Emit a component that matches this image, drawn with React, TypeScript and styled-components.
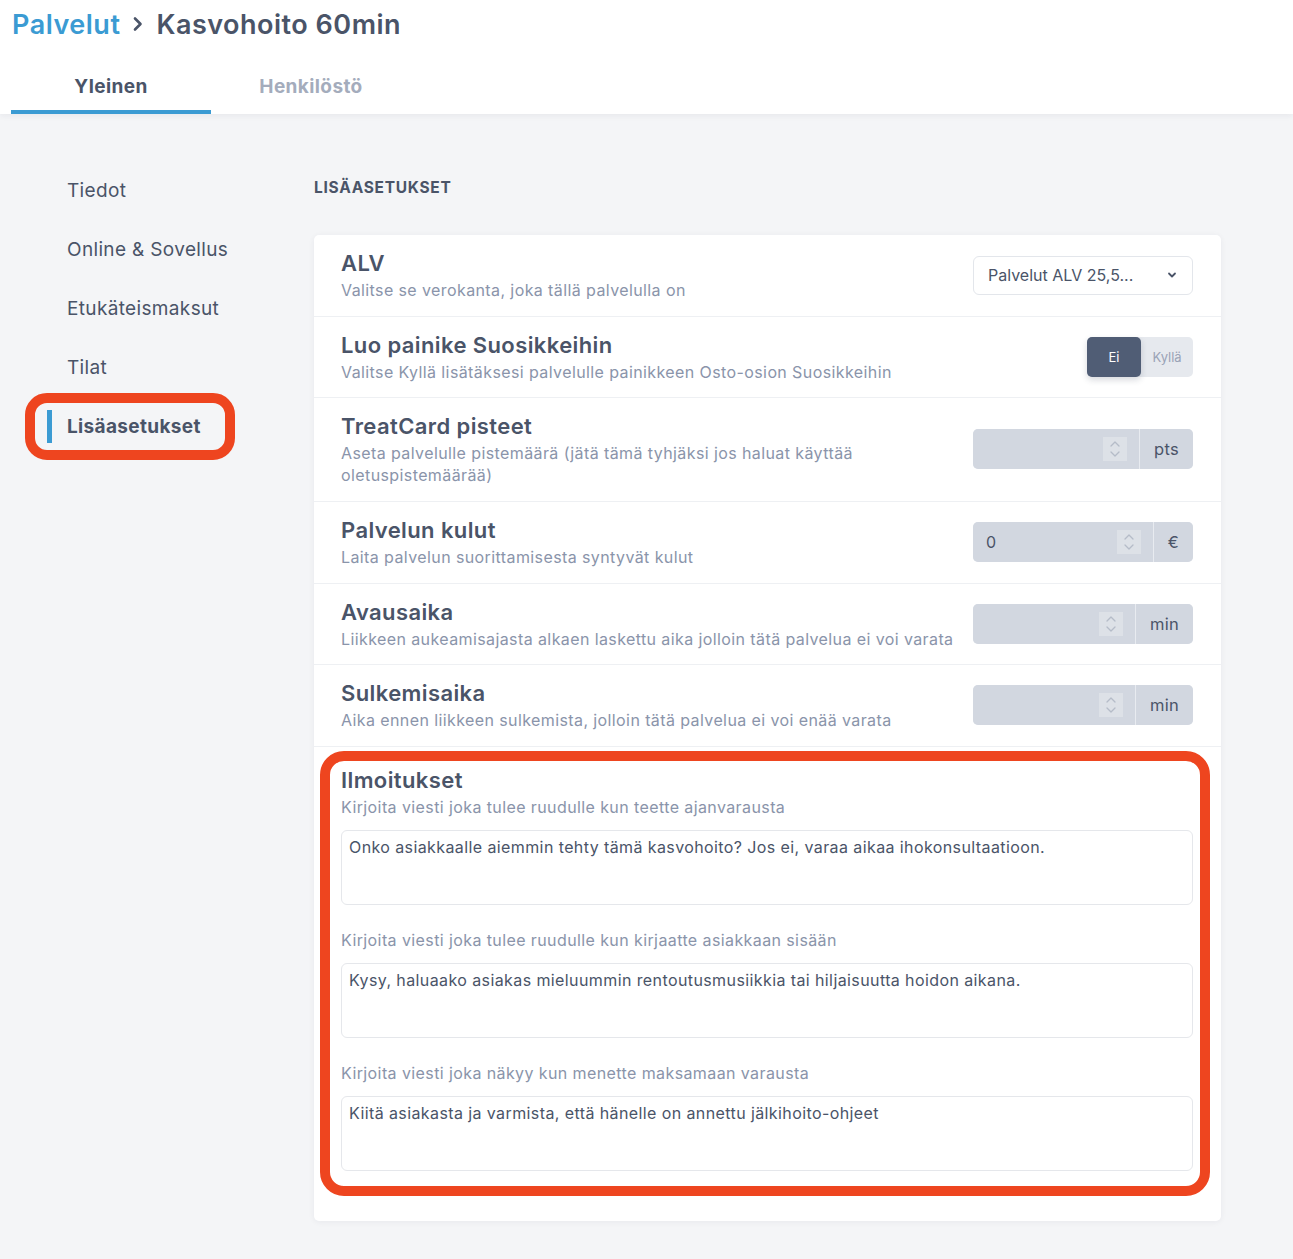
import * as React from 'react';
import styled, { createGlobalStyle } from 'styled-components';

const GlobalStyle = createGlobalStyle`
    body {
        margin: 0;
        background: #f4f5f7;
        font-family: Inter, "Open Sans", sans-serif;
        color: #4a5468;
    }
    * {
        box-sizing: border-box;
    }
`;

const Header = styled.header`
    background: #fff;
    box-shadow: 0 2px 6px rgba(30, 40, 60, 0.06);
    position: relative;
    z-index: 1;
`;

const Breadcrumb = styled.h1`
    margin: 0;
    height: 48px;
    padding-left: 12px;
    display: flex;
    align-items: center;
    gap: 12px;
    font-size: 27px;
    font-weight: 600;
    color: #4a5468;
    letter-spacing: 0.5px;

    .crumb-link {
        color: #3b9bd3;
    }
`;

const Tabs = styled.nav`
    display: flex;
    padding-left: 11px;
    height: 66px;
`;

const Tab = styled.div<{ $active?: boolean }>`
    width: 200px;
    display: flex;
    align-items: center;
    justify-content: center;
    padding-top: 14px;
    font-size: 19px;
    font-weight: 700;
    letter-spacing: 0.4px;
    color: ${p => (p.$active ? '#4a5468' : '#a4acbc')};
    border-bottom: 4px solid ${p => (p.$active ? '#3b9bd3' : 'transparent')};
`;

const Body = styled.div`
    display: flex;
    align-items: flex-start;
`;

const Sidebar = styled.aside`
    width: 314px;
    flex: none;
    padding: 47px 0 0 47px;
`;

const SideItem = styled.div<{ $active?: boolean }>`
    position: relative;
    height: 59px;
    display: flex;
    align-items: center;
    padding-left: 20px;
    font-size: 19px;
    letter-spacing: 0.35px;
    font-weight: ${p => (p.$active ? 700 : 400)};
    color: #4a5468;

    &::before {
        content: '';
        display: ${p => (p.$active ? 'block' : 'none')};
        position: absolute;
        left: 0;
        top: 13px;
        width: 5px;
        height: 33px;
        background: #3b9bd3;
    }
`;

const Highlight = styled.div<{ $radius: number }>`
    position: absolute;
    border: 10px solid #ee451f;
    border-radius: ${p => p.$radius}px;
    pointer-events: none;
`;

const Content = styled.main`
    width: 907px;
    padding: 64px 0 37px;
`;

const SectionTitle = styled.h2`
    margin: 0 0 37px;
    height: 20px;
    line-height: 20px;
    font-size: 15.5px;
    font-weight: 700;
    letter-spacing: 0.7px;
    text-transform: uppercase;
    color: #4a5468;
`;

const Card = styled.section`
    background: #fff;
    border-radius: 5px;
    box-shadow: 0 1px 6px rgba(30, 40, 60, 0.06);
`;

const Row = styled.div`
    display: flex;
    align-items: center;
    gap: 18px;
    padding: 14px 28px 14.7px 27px;
    border-bottom: 1px solid #eef0f3;
`;

const RowText = styled.div`
    flex: 1;
    min-width: 0;
`;

const RowTitle = styled.div`
    font-size: 22px;
    line-height: 28px;
    font-weight: 600;
    letter-spacing: 0.4px;
    color: #4a5468;
    margin-bottom: 2px;
`;

const RowDesc = styled.div`
    font-size: 16px;
    line-height: 22px;
    letter-spacing: 0.4px;
    color: #8a94aa;
`;

const SelectBox = styled.div`
    width: 220px;
    height: 39px;
    flex: none;
    display: flex;
    align-items: center;
    justify-content: space-between;
    padding: 0 14px 0 14px;
    border: 1px solid #e3e6eb;
    border-radius: 6px;
    font-size: 16px;
    color: #4a5468;
`;

const Toggle = styled.div`
    display: flex;
    height: 40px;
    flex: none;
    background: #e6e9ee;
    border-radius: 5px;
`;

const ToggleOption = styled.div<{ $active?: boolean }>`
    width: ${p => (p.$active ? 54 : 52)}px;
    display: flex;
    align-items: center;
    justify-content: center;
    font-size: 13px;
    border-radius: 5px;
    color: ${p => (p.$active ? '#fff' : '#9aa3b6')};
    background: ${p => (p.$active ? '#505d75' : 'transparent')};
    box-shadow: ${p => (p.$active ? '0 3px 6px rgba(40, 50, 70, 0.18)' : 'none')};
`;

const InputGroup = styled.div`
    width: 220px;
    height: 40px;
    flex: none;
    display: flex;
    gap: 1px;
    background: #e8ebf0;
    border-radius: 5px;
`;

const NumberField = styled.div`
    flex: 1;
    display: flex;
    align-items: center;
    justify-content: space-between;
    padding: 0 12px 0 13px;
    background: #d2d7e0;
    border-radius: 5px 0 0 5px;
    font-size: 16px;
    color: #4a5468;
`;

const Spinner = styled.span`
    width: 24px;
    height: 24px;
    display: flex;
    align-items: center;
    justify-content: center;
    background: #dde1e7;
    margin-left: auto;
`;

const Addon = styled.div`
    display: flex;
    align-items: center;
    padding: 0 14px;
    background: #d2d7e0;
    border-radius: 0 5px 5px 0;
    font-size: 16.5px;
    letter-spacing: 0.3px;
    color: #4a5468;
`;

const NoticeSection = styled.div`
    position: relative;
    padding: 19px 28px 50px 27px;
`;

const FieldLabel = styled.div<{ $spaced?: boolean }>`
    font-size: 16px;
    line-height: 22px;
    letter-spacing: 0.4px;
    color: #8a94aa;
    margin-top: ${p => (p.$spaced ? 24 : 0)}px;
`;

const TextArea = styled.textarea`
    display: block;
    width: 100%;
    height: 75px;
    margin-top: 12px;
    padding: 5px 7px;
    border: 1px solid #e5e7eb;
    border-radius: 6px;
    resize: none;
    font-family: inherit;
    font-size: 16px;
    line-height: 22px;
    letter-spacing: 0.4px;
    color: #4a5468;
    outline: none;
`;

const SpinnerIcon = () => (
    <Spinner>
        <svg width="12" height="18" viewBox="0 0 12 18" fill="none" stroke="#b5bcc8" strokeWidth="1.3" strokeLinecap="round" strokeLinejoin="round">
            <path d="M2 6 L6 2 L10 6" />
            <path d="M2 12 L6 16 L10 12" />
        </svg>
    </Spinner>
);

const NumberInput = ({ value, unit }: { value?: string; unit: string }) => (
    <InputGroup>
        <NumberField>
            {value}
            <SpinnerIcon />
        </NumberField>
        <Addon>{unit}</Addon>
    </InputGroup>
);

const sideItems = ['Tiedot', 'Online & Sovellus', 'Etukäteismaksut', 'Tilat', 'Lisäasetukset'];

export default function App() {
    return (
        <>
            <GlobalStyle />
            <Header>
                <Breadcrumb>
                    <span className="crumb-link">Palvelut</span>
                    <svg width="12" height="16" viewBox="0 0 12 16" fill="none" stroke="#4a5468" strokeWidth="2.6" strokeLinecap="round" strokeLinejoin="round">
                        <path d="M3 2.5 L8.5 8 L3 13.5" />
                    </svg>
                    <span>Kasvohoito 60min</span>
                </Breadcrumb>
                <Tabs>
                    <Tab $active>Yleinen</Tab>
                    <Tab>Henkilöstö</Tab>
                </Tabs>
            </Header>
            <Body>
                <Sidebar>
                    {sideItems.map(item => {
                        const active = item === 'Lisäasetukset';
                        return (
                            <SideItem key={item} $active={active}>
                                {item}
                                {active && (
                                    <Highlight
                                        $radius={22}
                                        style={{ left: -22, top: -4, width: 210, height: 67 }}
                                    />
                                )}
                            </SideItem>
                        );
                    })}
                </Sidebar>
                <Content>
                    <SectionTitle>Lisäasetukset</SectionTitle>
                    <Card>
                        <Row>
                            <RowText>
                                <RowTitle>ALV</RowTitle>
                                <RowDesc>Valitse se verokanta, joka tällä palvelulla on</RowDesc>
                            </RowText>
                            <SelectBox>
                                <span>Palvelut ALV 25,5...</span>
                                <svg width="12" height="12" viewBox="0 0 12 12" fill="none" stroke="#4a5468" strokeWidth="1.8" strokeLinecap="round" strokeLinejoin="round">
                                    <path d="M3 4.5 L6 7.5 L9 4.5" />
                                </svg>
                            </SelectBox>
                        </Row>
                        <Row>
                            <RowText>
                                <RowTitle>Luo painike Suosikkeihin</RowTitle>
                                <RowDesc>Valitse Kyllä lisätäksesi palvelulle painikkeen Osto-osion Suosikkeihin</RowDesc>
                            </RowText>
                            <Toggle>
                                <ToggleOption $active>Ei</ToggleOption>
                                <ToggleOption>Kyllä</ToggleOption>
                            </Toggle>
                        </Row>
                        <Row>
                            <RowText>
                                <RowTitle>TreatCard pisteet</RowTitle>
                                <RowDesc>Aseta palvelulle pistemäärä (jätä tämä tyhjäksi jos haluat käyttää oletuspistemäärää)</RowDesc>
                            </RowText>
                            <NumberInput unit="pts" />
                        </Row>
                        <Row>
                            <RowText>
                                <RowTitle>Palvelun kulut</RowTitle>
                                <RowDesc>Laita palvelun suorittamisesta syntyvät kulut</RowDesc>
                            </RowText>
                            <NumberInput value="0" unit="€" />
                        </Row>
                        <Row>
                            <RowText>
                                <RowTitle>Avausaika</RowTitle>
                                <RowDesc>Liikkeen aukeamisajasta alkaen laskettu aika jolloin tätä palvelua ei voi varata</RowDesc>
                            </RowText>
                            <NumberInput unit="min" />
                        </Row>
                        <Row>
                            <RowText>
                                <RowTitle>Sulkemisaika</RowTitle>
                                <RowDesc>Aika ennen liikkeen sulkemista, jolloin tätä palvelua ei voi enää varata</RowDesc>
                            </RowText>
                            <NumberInput unit="min" />
                        </Row>
                        <NoticeSection>
                            <RowTitle>Ilmoitukset</RowTitle>
                            <FieldLabel>Kirjoita viesti joka tulee ruudulle kun teette ajanvarausta</FieldLabel>
                            <TextArea readOnly defaultValue="Onko asiakkaalle aiemmin tehty tämä kasvohoito? Jos ei, varaa aikaa ihokonsultaatioon." />
                            <FieldLabel $spaced>Kirjoita viesti joka tulee ruudulle kun kirjaatte asiakkaan sisään</FieldLabel>
                            <TextArea readOnly defaultValue="Kysy, haluaako asiakas mieluummin rentoutusmusiikkia tai hiljaisuutta hoidon aikana." />
                            <FieldLabel $spaced>Kirjoita viesti joka näkyy kun menette maksamaan varausta</FieldLabel>
                            <TextArea readOnly defaultValue="Kiitä asiakasta ja varmista, että hänelle on annettu jälkihoito-ohjeet" />
                            <Highlight
                                $radius={24}
                                style={{ left: 6, top: 4, right: 11, bottom: 25 }}
                            />
                        </NoticeSection>
                    </Card>
                </Content>
            </Body>
        </>
    );
}
